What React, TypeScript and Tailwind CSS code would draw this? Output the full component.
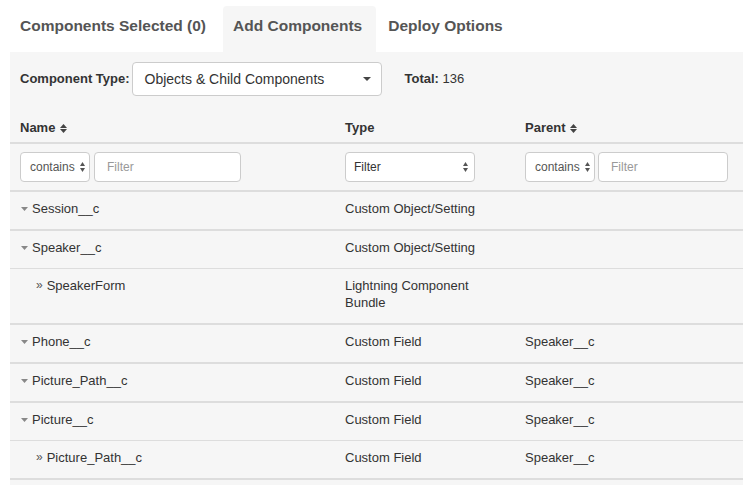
import React from "react";

const font = "font-['Liberation_Sans',Arial,Helvetica,sans-serif]";

function SortIcon() {
  return (
    <svg width="7" height="9" viewBox="0 0 7 9" className="ml-[5px] inline-block" fill="#444">
      <polygon points="0,4 3.5,0 7,4" />
      <polygon points="0,5 7,5 3.5,9" />
    </svg>
  );
}

function UpDown() {
  return (
    <svg width="5" height="10" viewBox="0 0 5 10" fill="#555">
      <polygon points="0,4 2.5,0 5,4" />
      <polygon points="0,6 5,6 2.5,10" />
    </svg>
  );
}

function Caret() {
  return (
    <svg width="7" height="4" viewBox="0 0 7 4" fill="#888" className="shrink-0">
      <polygon points="0,0 7,0 3.5,4" />
    </svg>
  );
}

type Row = {
  name: string;
  type: React.ReactNode;
  parent: string;
  child: boolean;
  border: "none" | "thin" | "thick";
};

const rows: Row[] = [
  { name: "Session__c", type: "Custom Object/Setting", parent: "", child: false, border: "none" },
  { name: "Speaker__c", type: "Custom Object/Setting", parent: "", child: false, border: "thick" },
  {
    name: "SpeakerForm",
    type: (
      <>
        Lightning Component
        <br />
        Bundle
      </>
    ),
    parent: "",
    child: true,
    border: "thin",
  },
  { name: "Phone__c", type: "Custom Field", parent: "Speaker__c", child: false, border: "thick" },
  { name: "Picture_Path__c", type: "Custom Field", parent: "Speaker__c", child: false, border: "thick" },
  { name: "Picture__c", type: "Custom Field", parent: "Speaker__c", child: false, border: "thick" },
  { name: "Picture_Path__c", type: "Custom Field", parent: "Speaker__c", child: true, border: "thin" },
];

function ContainsSelect() {
  return (
    <div className="w-[70px] h-[30px] border border-[#ccc] rounded-[4px] bg-white flex items-center justify-between pl-[9px] pr-[4px] text-[12px] text-[#555]">
      <span>contains</span>
      <UpDown />
    </div>
  );
}

function FilterInput({ w }: { w: string }) {
  return (
    <input
      placeholder="Filter"
      className={`${w} h-[30px] border border-[#ccc] rounded-[4px] bg-white pl-[12px] text-[12px] text-[#333] placeholder:text-[#999] outline-none`}
    />
  );
}

export default function App() {
  return (
    <div className={`${font} w-[743px] h-[485px] overflow-hidden bg-white flex flex-col`}>
      {/* Tabs */}
      <div className="flex pt-[6px] pl-[10px] gap-[2px]">
        <div className="pl-[10px] pr-[15px] pt-[9px] pb-[15px] leading-[22px] text-[15.5px] font-bold text-[#555] rounded-t-[4px]">
          Components Selected (0)
        </div>
        <div className="pl-[10px] pr-[14px] pt-[9px] pb-[15px] leading-[22px] text-[15.5px] font-bold text-[#555] rounded-t-[4px] bg-[#f6f6f6]">
          Add Components
        </div>
        <div className="pl-[10px] pr-[14px] pt-[9px] pb-[15px] leading-[22px] text-[15.5px] font-bold text-[#555] rounded-t-[4px]">
          Deploy Options
        </div>
      </div>

      {/* Panel */}
      <div className="ml-[10px] flex-1 bg-[#f6f6f6] pt-[10px]">
        {/* Toolbar */}
        <div className="flex items-center h-[34px] mb-[10px] pl-[10px] text-[13px] text-[#333]">
          <span className="font-bold">Component Type:</span>
          <div className="ml-[2px] w-[250px] h-[34px] border border-[#ccc] rounded-[4px] bg-white flex items-center justify-between pl-[12px] pr-[10px] text-[14px] text-[#333]">
            <span>Objects &amp; Child Components</span>
            <svg width="8" height="4" viewBox="0 0 8 4" fill="#444">
              <polygon points="0,0 8,0 4,4" />
            </svg>
          </div>
          <span className="ml-[23px]">
            <span className="font-bold">Total:</span> 136
          </span>
        </div>

        {/* Header row */}
        <div className="grid grid-cols-[325px_180px_1fr] border-b-2 border-[#ddd] text-[13px] font-bold text-[#333] leading-[18px]">
          <div className="pl-[10px] pt-[13px] pb-[5px] flex items-center">
            Name
            <SortIcon />
          </div>
          <div className="pl-[10px] pt-[13px] pb-[5px]">Type</div>
          <div className="pl-[10px] pt-[13px] pb-[5px] flex items-center">
            Parent
            <SortIcon />
          </div>
        </div>

        {/* Filter row */}
        <div className="grid grid-cols-[325px_180px_1fr] border-b-2 border-[#ddd]">
          <div className="pl-[10px] py-[8px] flex items-center">
            <ContainsSelect />
            <div className="ml-[4px] flex">
              <FilterInput w="w-[147px]" />
            </div>
          </div>
          <div className="pl-[10px] py-[8px] flex items-center">
            <div className="w-[130px] h-[30px] border border-[#ccc] rounded-[4px] bg-white flex items-center justify-between pl-[8px] pr-[6px] text-[12px] text-[#333]">
              <span>Filter</span>
              <UpDown />
            </div>
          </div>
          <div className="pl-[10px] py-[8px] flex items-center">
            <ContainsSelect />
            <div className="ml-[3px] flex">
              <FilterInput w="w-[130px]" />
            </div>
          </div>
        </div>

        {/* Data rows */}
        {rows.map((r, i) => (
          <div
            key={i}
            className={`grid grid-cols-[325px_180px_1fr] text-[13px] text-[#333] leading-[17px] ${
              r.border === "thick" ? "border-t-2 border-[#ddd]" : r.border === "thin" ? "border-t border-[#ddd]" : ""
            } ${i === rows.length - 1 ? "border-b-2" : ""}`}
          >
            <div className="pl-[10px] pt-[8px] pb-[12px]">
              {r.child ? (
                <div className="flex items-center pl-[16px]">
                  <span className="text-[12px] text-[#555] mr-[4px]">»</span>
                  <span>{r.name}</span>
                </div>
              ) : (
                <div className="flex items-center pl-[1px]">
                  <Caret />
                  <span className="ml-[4px]">{r.name}</span>
                </div>
              )}
            </div>
            <div className="pl-[10px] pt-[8px] pb-[12px]">{r.type}</div>
            <div className="pl-[10px] pt-[8px] pb-[12px]">{r.parent}</div>
          </div>
        ))}
      </div>
    </div>
  );
}
